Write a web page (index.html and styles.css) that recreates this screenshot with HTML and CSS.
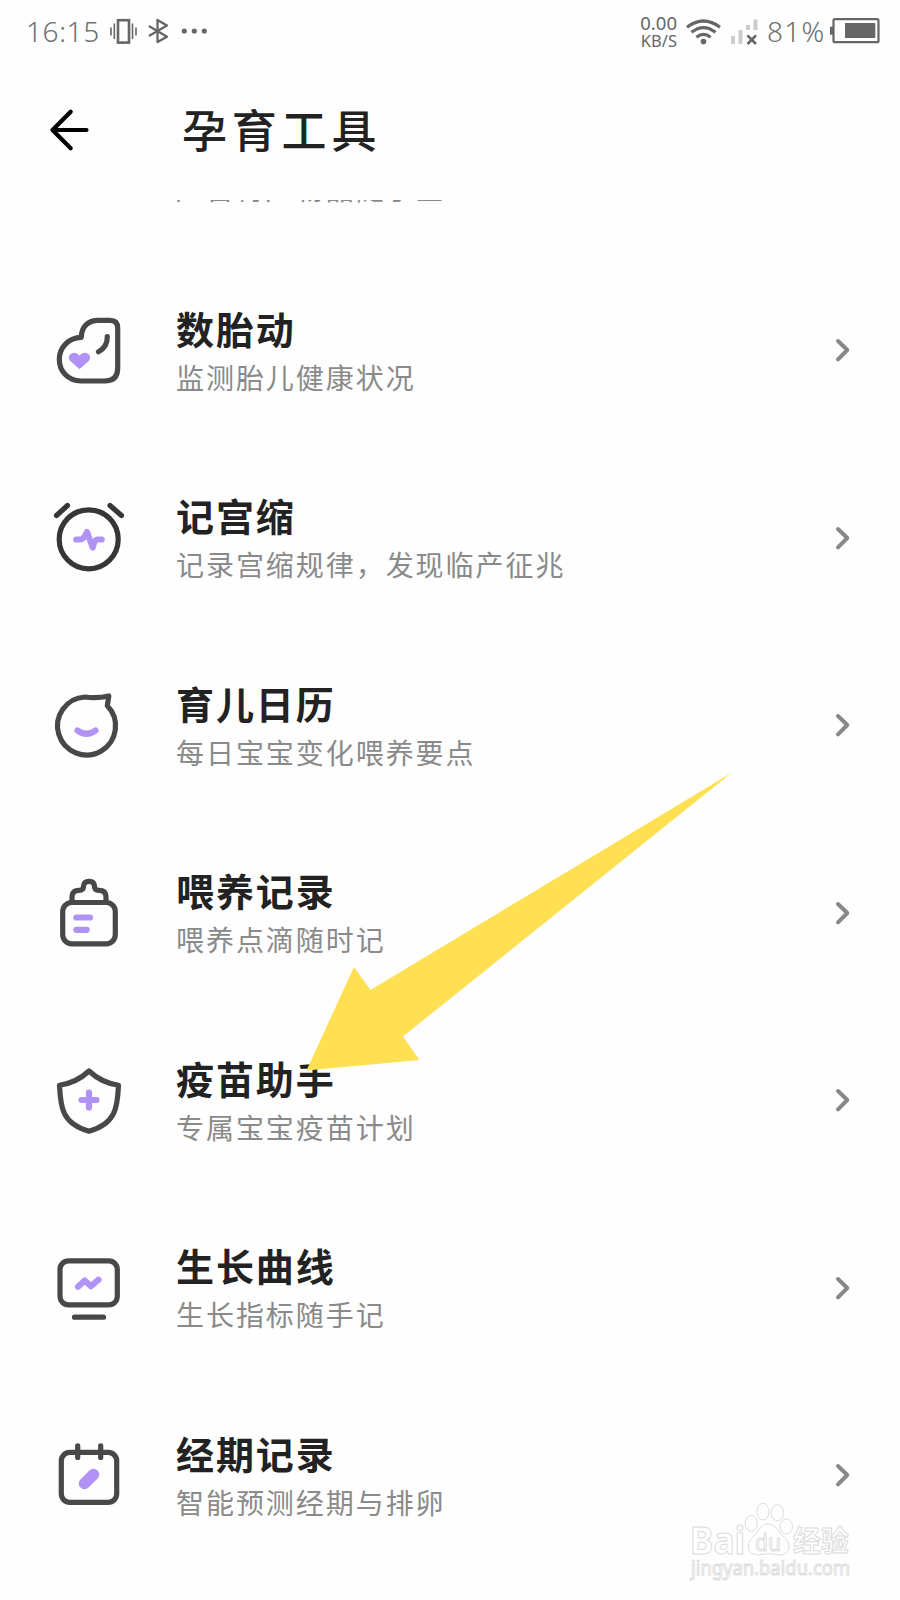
FILE: index.html
```html
<!DOCTYPE html>
<html lang="zh-CN">
<head>
<meta charset="utf-8">
<title>孕育工具</title>
<link rel="stylesheet" href="styles.css">
</head>
<body>
<div class="screen">
  <header class="header">
    <div class="status">
      <span class="time">16:15</span>
      <svg class="status-left" viewBox="108 16 102 30" width="102" height="30" fill="none" stroke="#666">
        <rect x="118" y="20.2" width="11" height="22.4" stroke-width="2.6"/>
        <path d="M114.3 23.5V39M111 27.5V35.5M132.5 23.5V39M136 27.5V35.5" stroke-width="1.6"/>
        <path d="M149.7 26.5L167 36.7L157.5 42V20L167 25.5L149.7 35.5" stroke-width="2.3" stroke-linejoin="round" stroke-linecap="round"/>
        <g fill="#666" stroke="none"><circle cx="184.3" cy="31" r="2.6"/><circle cx="194.3" cy="31" r="2.6"/><circle cx="204.3" cy="31" r="2.6"/></g>
      </svg>
      <div class="speed"><span class="rate">0.00</span><span class="unit">KB/S</span></div>
      <svg class="signals" viewBox="684 14 78 32" width="78" height="32" fill="none" stroke="#666">
        <g stroke-width="3.2"><path d="M687 26.2Q703.5 13.8 720 26.2M691.5 31.3Q703.5 21.8 715.5 31.3M696.5 36.2Q703.5 30.5 710.5 36.2"/></g>
        <circle cx="703.5" cy="40.6" r="2.8" fill="#666" stroke="none"/>
        <g fill="#ccc" stroke="none"><rect x="731" y="35" width="4" height="8"/><rect x="738.5" y="29" width="4" height="14"/><rect x="746" y="24" width="4" height="5"/><rect x="753.5" y="18.5" width="4" height="10.5"/></g>
        <path d="M747.5 34.3L756 43M756 34.3L747.5 43" stroke-width="2.6"/>
      </svg>
      <span class="percent">81%</span>
      <svg class="battery" viewBox="829 16 52 30" width="52" height="30">
        <rect x="833.5" y="19.2" width="45" height="23" rx="1.5" fill="none" stroke="#666" stroke-width="2.2"/>
        <rect x="830" y="26.7" width="3.5" height="8" fill="#666"/><rect x="845" y="23" width="30.3" height="15" fill="#666"/>
      </svg>
    </div>
    <div class="titlebar">
      <svg viewBox="48 106 44 48" width="44" height="48" fill="none" stroke="#000" stroke-width="4.2" stroke-linecap="round" stroke-linejoin="round"><path d="M70.7 111.7L52.5 130L70.7 148.3M52.5 130H86.5"/></svg>
      <h1 class="heading">孕育工具</h1>
    </div>
  </header>

  <main class="list">
    <div class="row row-partial"><div class="text"><div class="sub">产备待产物品随手查</div></div></div>

    <div class="row">
      <svg class="icon" viewBox="0 0 80 80"><path d="M33.3 27.3C33.5 17 40 10.3 50 10.3H62Q69.7 10.3 69.7 18V58Q69.7 71 56.7 71H33C20 71 11.3 61 11.3 49.5C11.3 37 21 27.5 33.3 27.3ZM59.3 26.5Q59.5 37 50.5 41.7"/><path class="fill" d="M31.5 58.2L22.8 50.5C18.5 45.500 26 40.500 31.500 46.500C37 40.500 44.500 45.500 40.200 50.500Z"/></svg>
      <div class="text"><div class="name">数胎动</div><div class="sub">监测胎儿健康状况</div></div>
      <svg class="chevron" viewBox="0 0 20 30"><path d="M5 6L14.3 15L5 24.3"/></svg>
    </div>
    <div class="row">
      <svg class="icon dark" viewBox="0 0 80 80"><circle cx="40.7" cy="41.3" r="29.5"/><path d="M8.500 17.500L19.500 7.500M62 7.500L73.500 17.500"/><path class="accent" d="M28.300 41.500H32.500Q35.500 41.500 39 34L44.700 49.500Q46.500 41.500 49.300 41.500H53.700"/></svg>
      <div class="text"><div class="name">记宫缩</div><div class="sub">记录宫缩规律，发现临产征兆</div></div>
      <svg class="chevron" viewBox="0 0 20 30"><path d="M5 6L14.3 15L5 24.3"/></svg>
    </div>
    <div class="row">
      <svg class="icon" viewBox="0 0 80 80"><path d="M37 12Q49 13.500 60.800 11L59.300 20.700A29 29 0 1 1 37 12Z"/><path class="accent" d="M29.500 45.500Q38.300 52 47.500 45.500"/></svg>
      <div class="text"><div class="name">育儿日历</div><div class="sub">每日宝宝变化喂养要点</div></div>
      <svg class="chevron" viewBox="0 0 20 30"><path d="M5 6L14.3 15L5 24.3"/></svg>
    </div>
    <div class="row">
      <svg class="icon" viewBox="0 0 80 80"><rect x="14.7" y="29.5" width="52.6" height="41.3" rx="9"/><path d="M24 28V24Q24 17.3 31 17.3Q35.5 17.3 35.5 13.5Q35.5 8.3 41 8.3Q46.5 8.3 46.5 13.5Q46.5 17.3 51 17.3Q58 17.3 58 24V28"/><path class="accent" d="M28.3 44.5H42M28.3 56.8H38.7"/></svg>
      <div class="text"><div class="name">喂养记录</div><div class="sub">喂养点滴随时记</div></div>
      <svg class="chevron" viewBox="0 0 20 30"><path d="M5 6L14.3 15L5 24.3"/></svg>
    </div>
    <div class="row">
      <svg class="icon" viewBox="0 0 80 80"><path d="M41 11C33 18.5 23 23.5 11.5 25.3C12.5 47 14 64 41 71.2C68 64 69.5 47 70.5 25.3C59 23.5 49 18.5 41 11Z"/><path class="accent" d="M33.5 40H48.5M41 32.5V47.5"/></svg>
      <div class="text"><div class="name">疫苗助手</div><div class="sub">专属宝宝疫苗计划</div></div>
      <svg class="chevron" viewBox="0 0 20 30"><path d="M5 6L14.3 15L5 24.3"/></svg>
    </div>
    <div class="row">
      <svg class="icon" viewBox="0 0 80 80"><rect x="12" y="12.8" width="57.3" height="44" rx="8.5"/><path d="M26.5 69.2H55.5"/><path class="accent" d="M30 38.7L36.700 32.500L43 38.200L50.500 31.700"/></svg>
      <div class="text"><div class="name">生长曲线</div><div class="sub">生长指标随手记</div></div>
      <svg class="chevron" viewBox="0 0 20 30"><path d="M5 6L14.3 15L5 24.3"/></svg>
    </div>
    <div class="row">
      <svg class="icon" viewBox="0 0 80 80"><rect x="13.3" y="17.3" width="55.4" height="50" rx="8.5"/><path d="M29.7 10.8V22.5M52.7 10.8V22.5"/><path class="accent pill" d="M36.5 48.5L45.5 39.5"/></svg>
      <div class="text"><div class="name">经期记录</div><div class="sub">智能预测经期与排卵</div></div>
      <svg class="chevron" viewBox="0 0 20 30"><path d="M5 6L14.3 15L5 24.3"/></svg>
    </div>
  </main>

  <svg class="pointer" viewBox="306 772 427 300"><path fill="#ffe052" d="M732 772.5L370.5 990L354 967L306.5 1070.5L419.5 1060L403 1036.5Z"/></svg>

  <svg class="watermark" viewBox="680 1495 180 95" fill="#fff" stroke="#d6d6d6" stroke-width="1">
    <text x="690" y="1554" class="wm-bold" font-size="37" textLength="55" lengthAdjust="spacingAndGlyphs">Bai</text>
    <ellipse cx="751.3" cy="1523.3" rx="6.2" ry="8"/><ellipse cx="763" cy="1511.7" rx="6" ry="8.3"/><ellipse cx="777.3" cy="1512.7" rx="6.3" ry="8"/><ellipse cx="786.3" cy="1526.5" rx="6.2" ry="7.5"/>
    <path d="M768 1524C776 1524 778 1532 784 1537C794 1546 788 1557 777 1554.5Q769 1553 761 1554.5C748 1557 745 1545 752 1538C759 1532 760 1524 768 1524Z"/>
    <text x="755" y="1550.5" class="wm-text" font-size="23" textLength="26" lengthAdjust="spacingAndGlyphs">du</text>
    <text x="793" y="1552" class="wm-bold" font-size="29" textLength="56" lengthAdjust="spacingAndGlyphs">经验</text>
    <text x="691" y="1575" class="wm-text" font-size="20" textLength="159" lengthAdjust="spacingAndGlyphs">jingyan.baidu.com</text>
  </svg>
</div>
</body>
</html>
```
FILE: styles.css
```css
body {
  margin: 0;
  background: #fefefe;
  font-family: "Noto Sans", "Noto Sans CJK SC", sans-serif;
}

.screen {
  position: relative;
  width: 900px;
  height: 1600px;
  overflow: hidden;
}

.header {
  height: 200px;
}

.status {
  display: flex;
  align-items: center;
  height: 62px;
  color: #707070;
  font-size: 28px;
  line-height: 30px;
}

.time {
  width: 82px;
  padding-left: 26px;
  font-weight: 300;
  letter-spacing: 0.6px;
}

.speed {
  display: flex;
  flex-direction: column;
  align-items: flex-end;
  width: 467px;
  color: #666;
}

.rate {
  font-size: 18.5px;
  line-height: 18px;
}

.unit {
  font-size: 16.5px;
  line-height: 17px;
}

.signals {
  margin-left: 7px;
}

.percent {
  width: 62px;
  margin-left: 5px;
  font-weight: 300;
  white-space: nowrap;
  font-size: 28px;
  letter-spacing: 1.2px;
}

.titlebar {
  display: flex;
  align-items: center;
  height: 136px;
  padding-left: 48px;
}

.heading {
  margin: 0 0 2px 90px;
  color: #222;
  font-family: "Noto Sans CJK SC", sans-serif;
  font-size: 45px;
  font-weight: 500;
  line-height: 60px;
  letter-spacing: 4.8px;
}

.list {
  height: 1400px;
  overflow: hidden;
}

.row {
  display: flex;
  height: 187.5px;
}

.row-partial {
  height: 56.25px;
  padding-left: 128px;
}

.row-partial .text {
  margin-top: -37.5px;
}

.row:not(.row-partial) .text {
  padding-top: 47.5px;
}

.icon {
  flex: none;
  width: 80px;
  height: 80px;
  margin: 53.75px 0 0 48px;
  fill: none;
  stroke: #484848;
  stroke-width: 5.2;
  stroke-linecap: round;
  stroke-linejoin: round;
}

.icon.dark {
  stroke: #363636;
}

.icon .accent {
  stroke: #b193f8;
  stroke-width: 6.2;
}

.icon .pill {
  stroke-width: 11.5;
}

.icon .fill {
  fill: #b193f8;
  stroke: #b193f8;
  stroke-width: 1.5;
}

.text {
  width: 657px;
  margin-left: 48px;
  font-family: "Noto Sans CJK SC", sans-serif;
  white-space: nowrap;
}

.name {
  color: #222;
  font-size: 38px;
  font-weight: 700;
  line-height: 48px;
  letter-spacing: 1.9px;
}

.sub {
  margin-top: 3px;
  color: #8a8a8a;
  font-size: 28px;
  line-height: 44px;
  letter-spacing: 1.95px;
}

.chevron {
  flex: none;
  width: 20px;
  height: 30px;
  margin-top: 78.75px;
  fill: none;
  stroke: #888;
  stroke-width: 4;
  stroke-linecap: round;
  stroke-linejoin: round;
}

.pointer {
  position: absolute;
  left: 306px;
  top: 772px;
  width: 427px;
  height: 300px;
}

.watermark {
  position: absolute;
  left: 680px;
  top: 1495px;
  width: 180px;
  height: 95px;
  opacity: 0.85;
}

.wm-bold {
  font-family: "Noto Sans", "Noto Sans CJK SC", sans-serif;
  font-weight: 700;
}

.wm-text {
  font-family: "Noto Sans", sans-serif;
}
```
